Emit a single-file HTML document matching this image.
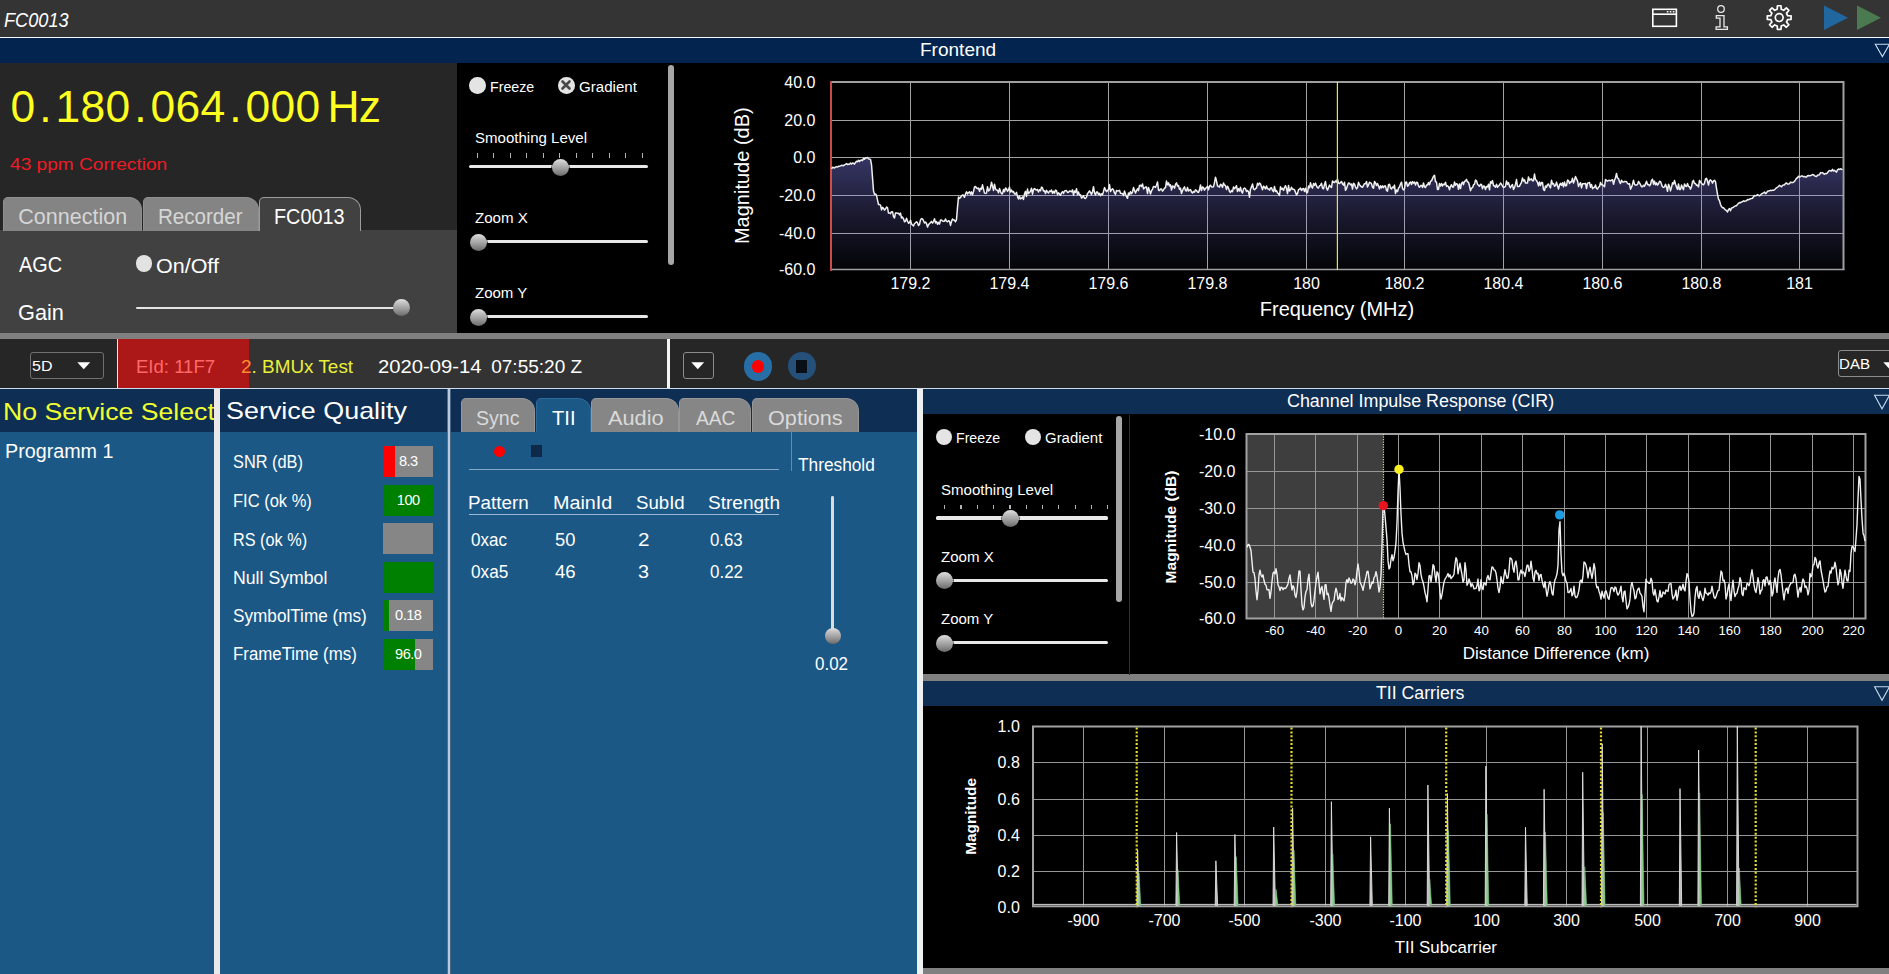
<!DOCTYPE html>
<html lang="en"><head><meta charset="utf-8"><title>FC0013</title>
<style>
html,body{margin:0;padding:0;background:#000;}
body{width:1889px;height:974px;position:relative;overflow:hidden;font-family:"Liberation Sans",Arial,sans-serif;}
.b{position:absolute;display:block;}
.t{position:absolute;white-space:pre;line-height:1;transform-origin:0 0;display:block;}
.knob{border-radius:50%;background:linear-gradient(180deg,#e0e0e0 0%,#c0c0c0 25%,#a0a0a0 55%,#6a6a6a 100%);box-shadow:0 0 0 0.6px #000;}
.nr{box-shadow:none;}
svg{overflow:hidden;}
</style></head>
<body>
<div class="b" style="left:0px;top:0px;width:1889px;height:37px;background:#343434;"></div>
<div class="b" style="left:0px;top:37px;width:1889px;height:1px;background:#f4f8fa;"></div>
<div class="b" style="left:0px;top:38px;width:1889px;height:25px;background:#02244e;"></div>
<span class="t" style="left:4.45px;top:11px;font-size:19.5px;color:#fff;transform:scaleX(0.9324);font-style:italic;">FC0013</span>
<span class="t" style="left:919.98px;top:42px;font-size:17.5px;color:#fff;transform:scaleX(1.0865);">Frontend</span>
<svg class="b" style="left:1640px;top:0;width:249px;height:63px" viewBox="1640 0 249 63"><g fill="none" stroke="#fff" stroke-width="1.6"><rect x="1652.8" y="9.3" width="23.6" height="17"/><path d="M1652.8,14.2H1676.4"/></g><path d="M1666.8,11.7h1.6M1669.8,11.7h1.6M1672.8,11.7h1.6" stroke="#fff" stroke-width="1.4"/><g fill="none" stroke="#e8e8e8" stroke-width="1.3"><circle cx="1721" cy="9" r="3.3"/><path d="M1716.3,15.6h7.7v11.2h3.4v2.5h-11.3v-2.5h3.9v-8.7h-3.7z"/></g><g fill="none" stroke="#fff" stroke-width="1.7" stroke-linejoin="round"><path d="M1777.19,9.24 L1777.42,5.73 L1780.98,5.73 L1781.21,9.24 L1783.69,10.27 L1786.33,7.95 L1788.85,10.47 L1786.53,13.11 L1787.56,15.59 L1791.07,15.82 L1791.07,19.38 L1787.56,19.61 L1786.53,22.09 L1788.85,24.73 L1786.33,27.25 L1783.69,24.93 L1781.21,25.96 L1780.98,29.47 L1777.42,29.47 L1777.19,25.96 L1774.71,24.93 L1772.07,27.25 L1769.55,24.73 L1771.87,22.09 L1770.84,19.61 L1767.33,19.38 L1767.33,15.82 L1770.84,15.59 L1771.87,13.11 L1769.55,10.47 L1772.07,7.95 L1774.71,10.27Z"/><circle cx="1779.2" cy="17.6" r="3.9"/></g><path d="M1824,5.5L1848,17.7L1824,30z" fill="#20669f"/><path d="M1857,5.5L1881,17.7L1857,30z" fill="#4b7a50"/><path d="M1875.3,44.2H1889.5L1882.4,56.6z" fill="none" stroke="#c8dcf0" stroke-width="1.1"/></svg>
<div class="b" style="left:0px;top:63px;width:457px;height:270px;background:#262626;"></div>
<span class="t" style="left:10.6px;top:85px;font-size:44.4px;color:#ffff20;letter-spacing:0.31px">0<span style="padding:0 3.67px">.</span>180<span style="padding:0 3.67px">.</span>064<span style="padding:0 3.67px">.</span>000 <span style="margin-left:-5.76px;letter-spacing:-0.6px">Hz</span></span>
<span class="t" style="left:10.02px;top:156px;font-size:16.5px;color:#f01a24;transform:scaleX(1.1585);">43 ppm Correction</span>
<div class="b" style="left:0px;top:230px;width:457px;height:103px;background:#414141;"></div>
<div class="b" style="left:3px;top:197px;width:138.8px;height:34px;background:#848484;box-sizing:border-box;border-radius:5px 13px 0 0;border:1px solid #909090;border-bottom:none;"></div><span class="t" style="left:18.32px;top:207px;font-size:21.5px;color:#d6d6d6;">Connection</span>
<div class="b" style="left:143px;top:197px;width:115.7px;height:34px;background:#848484;box-sizing:border-box;border-radius:5px 13px 0 0;border:1px solid #909090;border-bottom:none;"></div><span class="t" style="left:158.36px;top:207px;font-size:21.5px;color:#d6d6d6;transform:scaleX(0.9557);">Recorder</span>
<div class="b" style="left:259px;top:197px;width:102px;height:34px;background:#414141;box-sizing:border-box;border-radius:5px 13px 0 0;border:1px solid #9c9c9c;border-bottom:none;"></div><span class="t" style="left:274.42px;top:207px;font-size:21.5px;color:#fff;transform:scaleX(0.9208);">FC0013</span>
<span class="t" style="left:18.7px;top:254px;font-size:22px;color:#fff;transform:scaleX(0.9027);">AGC</span>
<div class="b" style="left:135.6px;top:255.2px;width:16.4px;height:16.4px;background:#e2e2e2;border-radius:50%;"></div>
<span class="t" style="left:156.03px;top:255px;font-size:21px;color:#fff;transform:scaleX(1.0234);">On/Off</span>
<span class="t" style="left:17.61px;top:302px;font-size:22px;color:#fff;transform:scaleX(0.9866);">Gain</span>
<div class="b" style="left:136px;top:306.6px;width:260px;height:2.2px;background:#e4e4e4;border-radius:1.5px;"></div>
<div class="b knob nr" style="left:393.2px;top:299.2px;width:17px;height:17px"></div>
<div class="b" style="left:457px;top:63px;width:1432px;height:270px;background:#000;"></div>
<div class="b" style="left:469px;top:77.1px;width:16.6px;height:16.6px;background:#e4e4e4;border-radius:50%;"></div>
<span class="t" style="left:489.86px;top:79px;font-size:15.5px;color:#fff;transform:scaleX(0.9164);">Freeze</span>
<div class="b" style="left:558.1px;top:77.1px;width:16.6px;height:16.6px;background:#e4e4e4;border-radius:50%;"></div><svg class="b" style="left:560.4px;top:79.4px;width:12px;height:12px" viewBox="-6 -6 12 12"><path d="M-3.5,-3.5L3.5,3.5M3.5,-3.5L-3.5,3.5" stroke="#484848" stroke-width="2.6" stroke-linecap="round"/></svg>
<span class="t" style="left:579.25px;top:79px;font-size:15.5px;color:#fff;transform:scaleX(0.9729);">Gradient</span>
<span class="t" style="left:474.92px;top:130px;font-size:15.5px;color:#fff;transform:scaleX(0.9702);">Smoothing Level</span>
<div class="b" style="left:476.8px;top:153px;width:1.2px;height:5.2px;background:#b4b4b4;"></div><div class="b" style="left:493.29px;top:153px;width:1.2px;height:5.2px;background:#b4b4b4;"></div><div class="b" style="left:509.78px;top:153px;width:1.2px;height:5.2px;background:#b4b4b4;"></div><div class="b" style="left:526.27px;top:153px;width:1.2px;height:5.2px;background:#b4b4b4;"></div><div class="b" style="left:542.76px;top:153px;width:1.2px;height:5.2px;background:#b4b4b4;"></div><div class="b" style="left:559.25px;top:153px;width:1.2px;height:5.2px;background:#b4b4b4;"></div><div class="b" style="left:575.74px;top:153px;width:1.2px;height:5.2px;background:#b4b4b4;"></div><div class="b" style="left:592.23px;top:153px;width:1.2px;height:5.2px;background:#b4b4b4;"></div><div class="b" style="left:608.72px;top:153px;width:1.2px;height:5.2px;background:#b4b4b4;"></div><div class="b" style="left:625.21px;top:153px;width:1.2px;height:5.2px;background:#b4b4b4;"></div><div class="b" style="left:641.7px;top:153px;width:1.2px;height:5.2px;background:#b4b4b4;"></div>
<div class="b" style="left:469.4px;top:165.2px;width:179px;height:3.2px;background:#e8e8e8;border-radius:1.5px;"></div>
<div class="b knob" style="left:551.5px;top:158.5px;width:17px;height:17px"></div>
<span class="t" style="left:475.25px;top:210px;font-size:15.5px;color:#fff;transform:scaleX(0.9743);">Zoom X</span>
<div class="b" style="left:478px;top:240px;width:170.2px;height:3.2px;background:#e8e8e8;border-radius:1.5px;"></div>
<div class="b knob" style="left:469.5px;top:233.5px;width:17px;height:17px"></div>
<span class="t" style="left:475.25px;top:285px;font-size:15.5px;color:#fff;transform:scaleX(0.9687);">Zoom Y</span>
<div class="b" style="left:478px;top:314.9px;width:170.2px;height:3.2px;background:#e8e8e8;border-radius:1.5px;"></div>
<div class="b knob" style="left:469.5px;top:308.5px;width:17px;height:17px"></div>
<div class="b" style="left:668.2px;top:65px;width:6.2px;height:199.5px;background:#a6a6a6;border-radius:3px;"></div>
<svg class="b" style="left:680px;top:63px;width:1209px;height:270px" viewBox="680 63 1209 270" font-family="Liberation Sans, Arial, sans-serif" fill="#fff">
<defs><linearGradient id="fg" x1="0" y1="155" x2="0" y2="270" gradientUnits="userSpaceOnUse"><stop offset="0" stop-color="#8684f6" stop-opacity="0.42"/><stop offset="0.5" stop-color="#8684f6" stop-opacity="0.2"/><stop offset="1" stop-color="#8684f6" stop-opacity="0.03"/></linearGradient></defs>
<path d="M831.5,120.5H1843.5M831.5,157.5H1843.5M831.5,195.5H1843.5M831.5,233.5H1843.5M910.5,82V270M1009.5,82V270M1108.5,82V270M1207.5,82V270M1306.5,82V270M1404.5,82V270M1503.5,82V270M1602.5,82V270M1701.5,82V270M1799.5,82V270" stroke="#a2a2a2" stroke-width="1" fill="none"/>
<path d="M831.5,82H1843.5V270" stroke="#a0a0a0" stroke-width="2" fill="none"/>
<path d="M831.5,269.4H1844.5" stroke="#a0a0a0" stroke-width="1.5" fill="none"/>
<path d="M831,81V271" stroke="#cc4a4a" stroke-width="2" fill="none"/>
<polygon points="831.5,270 831.5,168.9 832.5,167.3 833.5,167.5 834.5,168 835.5,167.2 836.5,166.6 837.5,167.1 838.5,166.2 839.5,166.3 840.5,165.9 841.5,165.3 842.5,165.5 843.5,165.7 844.5,164.9 845.5,164.3 846.5,163.6 847.5,164.5 848.5,164.2 849.5,164.2 850.5,163 851.5,164 852.5,163.1 853.5,163.2 854.5,164.1 855.5,162.4 856.5,161.3 857.5,161.7 858.5,160.3 859.5,161.4 860.5,160.4 861.5,160 862.5,160.6 863.5,158.2 864.5,159.2 865.5,157.8 866.5,157.9 867.5,157.4 868.5,158.8 869.5,159.1 870.5,159.5 871.5,164.6 872.5,177.5 873.5,190.9 874.5,194.2 875.5,193.9 876.5,195.3 877.5,199.8 878.5,204.6 879.5,204.5 880.5,205.2 881.5,209.9 882.5,207.4 883.5,208.4 884.5,210.1 885.5,209 886.5,207 887.5,207.7 888.5,213.1 889.5,212.9 890.5,213.6 891.5,211.7 892.5,211.7 893.5,216.6 894.5,218 895.5,212.9 896.5,213 897.5,213.2 898.5,213.2 899.5,214.9 900.5,213.1 901.5,218.1 902.5,217 903.5,218.8 904.5,221.7 905.5,221.4 906.5,218.2 907.5,221 908.5,223.3 909.5,222.6 910.5,220.3 911.5,223.9 912.5,225 913.5,225.9 914.5,223.5 915.5,222.8 916.5,221.8 917.5,222.8 918.5,225.6 919.5,224.4 920.5,219.9 921.5,218.6 922.5,219 923.5,220.7 924.5,223 925.5,222 926.5,223.5 927.5,227.1 928.5,224.7 929.5,223.5 930.5,222.6 931.5,221.4 932.5,223.1 933.5,221.6 934.5,218.8 935.5,222.9 936.5,221.5 937.5,224.3 938.5,222.4 939.5,224 940.5,220 941.5,220.1 942.5,221 943.5,221.3 944.5,221.3 945.5,219 946.5,221.2 947.5,221.8 948.5,220.8 949.5,221.2 950.5,225.4 951.5,221.4 952.5,219 953.5,220 954.5,220.1 955.5,221.8 956.5,219.7 957.5,207.4 958.5,197 959.5,198.4 960.5,197.5 961.5,195.9 962.5,195 963.5,195.3 964.5,197.3 965.5,193.8 966.5,191.7 967.5,194 968.5,192.5 969.5,191.8 970.5,194.3 971.5,191.9 972.5,194.9 973.5,191.6 974.5,186.9 975.5,186.5 976.5,188 977.5,188.5 978.5,188.1 979.5,191.4 980.5,188.3 981.5,189.2 982.5,184.8 983.5,189.1 984.5,193.1 985.5,193.4 986.5,193.1 987.5,186.7 988.5,190.9 989.5,190.2 990.5,187.5 991.5,182.2 992.5,186.1 993.5,190.4 994.5,184.2 995.5,188.9 996.5,190 997.5,190.2 998.5,192.8 999.5,188.6 1000.5,191.5 1001.5,193.8 1002.5,193.7 1003.5,189.5 1004.5,191.7 1005.5,188 1006.5,188.9 1007.5,191.2 1008.5,190.1 1009.5,187.1 1010.5,192.1 1011.5,190 1012.5,192 1013.5,191.5 1014.5,194 1015.5,194.1 1016.5,192.3 1017.5,196.6 1018.5,199 1019.5,196 1020.5,198.9 1021.5,198.4 1022.5,196.8 1023.5,199.4 1024.5,193.9 1025.5,191.4 1026.5,196.5 1027.5,189.1 1028.5,193.6 1029.5,192.4 1030.5,191.2 1031.5,188.3 1032.5,194.2 1033.5,189.6 1034.5,188.5 1035.5,189.5 1036.5,190.1 1037.5,189.5 1038.5,192 1039.5,189.8 1040.5,190.7 1041.5,187.1 1042.5,187.9 1043.5,191 1044.5,190.7 1045.5,193.6 1046.5,190.3 1047.5,192 1048.5,192.9 1049.5,191 1050.5,191.5 1051.5,190 1052.5,193.3 1053.5,191.4 1054.5,193.2 1055.5,190.1 1056.5,190.7 1057.5,194.6 1058.5,192.8 1059.5,194 1060.5,195.3 1061.5,192.9 1062.5,191.6 1063.5,193.5 1064.5,191 1065.5,190.8 1066.5,190.6 1067.5,192.5 1068.5,192.2 1069.5,191 1070.5,191.2 1071.5,191.8 1072.5,189.8 1073.5,195.1 1074.5,190.9 1075.5,192.4 1076.5,188.7 1077.5,194.5 1078.5,191.9 1079.5,195.1 1080.5,194.7 1081.5,198.1 1082.5,197.2 1083.5,195.7 1084.5,198.3 1085.5,198.4 1086.5,197.1 1087.5,193.5 1088.5,192.5 1089.5,190.9 1090.5,192.4 1091.5,194.6 1092.5,191.7 1093.5,186.7 1094.5,192.9 1095.5,195 1096.5,191.9 1097.5,192.1 1098.5,194.4 1099.5,193.3 1100.5,195.7 1101.5,193.8 1102.5,194.7 1103.5,191.4 1104.5,187.6 1105.5,189.6 1106.5,191.6 1107.5,190.6 1108.5,189.4 1109.5,184.5 1110.5,191.6 1111.5,189.7 1112.5,188.8 1113.5,189.9 1114.5,193 1115.5,194.4 1116.5,190.4 1117.5,191.1 1118.5,190.8 1119.5,190.3 1120.5,193.2 1121.5,193.6 1122.5,193.5 1123.5,195.6 1124.5,191 1125.5,194.3 1126.5,196.6 1127.5,198.3 1128.5,192.9 1129.5,194.7 1130.5,191.6 1131.5,193.8 1132.5,192 1133.5,187.6 1134.5,190.3 1135.5,193 1136.5,190.8 1137.5,188.7 1138.5,190.7 1139.5,185.4 1140.5,185.2 1141.5,186.5 1142.5,183.9 1143.5,188.9 1144.5,188 1145.5,187.1 1146.5,187.1 1147.5,193.6 1148.5,187.6 1149.5,190.4 1150.5,194 1151.5,190.9 1152.5,189.1 1153.5,186.5 1154.5,186.7 1155.5,187.3 1156.5,185.2 1157.5,181.9 1158.5,190.2 1159.5,190.6 1160.5,188.9 1161.5,189.1 1162.5,191.1 1163.5,189.9 1164.5,188 1165.5,187.7 1166.5,181.1 1167.5,184.8 1168.5,182.8 1169.5,185.9 1170.5,184.9 1171.5,190 1172.5,186 1173.5,186.4 1174.5,188.2 1175.5,184.4 1176.5,182.9 1177.5,186 1178.5,185.5 1179.5,189.4 1180.5,188.1 1181.5,193.5 1182.5,190.8 1183.5,188.3 1184.5,186.8 1185.5,190.6 1186.5,191 1187.5,187.4 1188.5,191 1189.5,189.9 1190.5,189.6 1191.5,191.9 1192.5,193 1193.5,191.5 1194.5,192.1 1195.5,189.9 1196.5,190.5 1197.5,192.1 1198.5,192.4 1199.5,189.9 1200.5,185 1201.5,190.5 1202.5,186.9 1203.5,187.6 1204.5,190.1 1205.5,188.3 1206.5,187.7 1207.5,186.3 1208.5,189.7 1209.5,186 1210.5,185.2 1211.5,186.8 1212.5,187 1213.5,186.7 1214.5,182.6 1215.5,177.2 1216.5,180.9 1217.5,186 1218.5,186.4 1219.5,187.1 1220.5,184.2 1221.5,185.1 1222.5,187.4 1223.5,183 1224.5,185 1225.5,185.6 1226.5,189.6 1227.5,186.2 1228.5,188 1229.5,191.5 1230.5,192.5 1231.5,190.4 1232.5,191.6 1233.5,187 1234.5,188.7 1235.5,187.5 1236.5,185.7 1237.5,191.6 1238.5,188.7 1239.5,191 1240.5,187.3 1241.5,191.7 1242.5,193.2 1243.5,188.9 1244.5,188 1245.5,188.7 1246.5,191.5 1247.5,190.6 1248.5,191.8 1249.5,197.2 1250.5,189.2 1251.5,186.9 1252.5,184 1253.5,188.9 1254.5,189.7 1255.5,188.7 1256.5,187.9 1257.5,183.3 1258.5,185 1259.5,183 1260.5,184.1 1261.5,186.7 1262.5,189.7 1263.5,186.1 1264.5,187.3 1265.5,188.9 1266.5,185.9 1267.5,188.8 1268.5,189 1269.5,190.1 1270.5,187.9 1271.5,187.7 1272.5,190.4 1273.5,191.6 1274.5,186.4 1275.5,191.4 1276.5,190.5 1277.5,192.9 1278.5,193.8 1279.5,195.5 1280.5,186.8 1281.5,189.3 1282.5,188.2 1283.5,190.4 1284.5,187.6 1285.5,185.7 1286.5,188.4 1287.5,193.6 1288.5,185.5 1289.5,191.1 1290.5,189.7 1291.5,187.2 1292.5,189.3 1293.5,189.2 1294.5,189.9 1295.5,192.4 1296.5,194.9 1297.5,193.5 1298.5,189.7 1299.5,189.2 1300.5,188.1 1301.5,190.5 1302.5,189 1303.5,188.5 1304.5,191.4 1305.5,188.2 1306.5,192.7 1307.5,192.6 1308.5,186.1 1309.5,187.8 1310.5,182.7 1311.5,186.6 1312.5,188.2 1313.5,183.6 1314.5,185.3 1315.5,183.1 1316.5,186 1317.5,187.7 1318.5,188 1319.5,185.8 1320.5,185.4 1321.5,183.2 1322.5,188.1 1323.5,188.8 1324.5,184.5 1325.5,181.5 1326.5,188 1327.5,190.1 1328.5,187.6 1329.5,185.1 1330.5,186.6 1331.5,187.5 1332.5,180.9 1333.5,182.3 1334.5,182.6 1335.5,181 1336.5,182.1 1337.5,179 1338.5,183.2 1339.5,183.5 1340.5,182.4 1341.5,181.5 1342.5,183.9 1343.5,185.1 1344.5,182.2 1345.5,190.3 1346.5,188.6 1347.5,185.6 1348.5,183 1349.5,183.2 1350.5,184.8 1351.5,184 1352.5,189 1353.5,183.3 1354.5,184 1355.5,187 1356.5,188.9 1357.5,187.5 1358.5,182.3 1359.5,184.8 1360.5,185.9 1361.5,186.9 1362.5,187.3 1363.5,185.3 1364.5,183.7 1365.5,183.8 1366.5,181.5 1367.5,187 1368.5,184.9 1369.5,182.2 1370.5,182.8 1371.5,183.7 1372.5,187.2 1373.5,188.3 1374.5,181.4 1375.5,182.9 1376.5,185.4 1377.5,183.6 1378.5,186.1 1379.5,188.9 1380.5,185.8 1381.5,187.9 1382.5,185.9 1383.5,187.6 1384.5,185.9 1385.5,186.1 1386.5,190.4 1387.5,191.1 1388.5,184.6 1389.5,184.3 1390.5,187.9 1391.5,189 1392.5,187.1 1393.5,187.8 1394.5,185.1 1395.5,193.6 1396.5,190 1397.5,191.6 1398.5,188.1 1399.5,187 1400.5,184.1 1401.5,182.2 1402.5,188.5 1403.5,189.9 1404.5,188.7 1405.5,182.5 1406.5,182 1407.5,186.2 1408.5,185.4 1409.5,182.9 1410.5,182 1411.5,184.5 1412.5,181.6 1413.5,183.1 1414.5,182 1415.5,185 1416.5,182.2 1417.5,182.5 1418.5,186.1 1419.5,187.3 1420.5,185.5 1421.5,185.4 1422.5,187.5 1423.5,183 1424.5,186.9 1425.5,187.5 1426.5,184.9 1427.5,185.1 1428.5,182.6 1429.5,184.8 1430.5,181.3 1431.5,180.9 1432.5,178.6 1433.5,176.2 1434.5,175.2 1435.5,181.7 1436.5,182 1437.5,189.6 1438.5,189.3 1439.5,183.4 1440.5,186 1441.5,183.4 1442.5,186 1443.5,184.2 1444.5,184.6 1445.5,182.2 1446.5,186.4 1447.5,185.7 1448.5,186.8 1449.5,189.8 1450.5,186.3 1451.5,184.7 1452.5,187.1 1453.5,187.1 1454.5,182.1 1455.5,185.2 1456.5,183.7 1457.5,184.4 1458.5,189.3 1459.5,184 1460.5,188.6 1461.5,183.5 1462.5,182.1 1463.5,184.6 1464.5,181.3 1465.5,181.1 1466.5,179.4 1467.5,182 1468.5,182.2 1469.5,186 1470.5,190.7 1471.5,187.9 1472.5,187.8 1473.5,184.9 1474.5,184.1 1475.5,180.1 1476.5,180.8 1477.5,184.1 1478.5,185.4 1479.5,186.3 1480.5,184.3 1481.5,184.4 1482.5,188.8 1483.5,185.9 1484.5,186.2 1485.5,189.5 1486.5,186.5 1487.5,186.9 1488.5,184.3 1489.5,189.8 1490.5,181.7 1491.5,183.1 1492.5,180.6 1493.5,185.5 1494.5,186 1495.5,187.2 1496.5,184.3 1497.5,187.2 1498.5,186.1 1499.5,185 1500.5,183 1501.5,184.2 1502.5,186.1 1503.5,187.6 1504.5,187.1 1505.5,186.2 1506.5,180.9 1507.5,184.3 1508.5,182.7 1509.5,186.1 1510.5,187.8 1511.5,185.5 1512.5,184.6 1513.5,189.5 1514.5,187.6 1515.5,184.1 1516.5,179.6 1517.5,186.6 1518.5,186.6 1519.5,186.2 1520.5,184.2 1521.5,182.3 1522.5,177.9 1523.5,181.1 1524.5,179.8 1525.5,183 1526.5,183 1527.5,182.9 1528.5,176.9 1529.5,180.3 1530.5,179.4 1531.5,178.8 1532.5,180.8 1533.5,180.7 1534.5,174.1 1535.5,179.7 1536.5,180.3 1537.5,182.3 1538.5,185.9 1539.5,181.9 1540.5,185.5 1541.5,182.4 1542.5,182.5 1543.5,189.6 1544.5,190.5 1545.5,186 1546.5,187.1 1547.5,184.6 1548.5,184 1549.5,186.2 1550.5,187.9 1551.5,180.3 1552.5,184 1553.5,183.6 1554.5,186.2 1555.5,185.6 1556.5,182.1 1557.5,185.7 1558.5,189 1559.5,185 1560.5,183.3 1561.5,185.3 1562.5,182.8 1563.5,186.8 1564.5,182.1 1565.5,185.7 1566.5,185.7 1567.5,180.1 1568.5,180.4 1569.5,183.5 1570.5,181.8 1571.5,181.9 1572.5,178.2 1573.5,183.1 1574.5,180.3 1575.5,176.5 1576.5,178.9 1577.5,180.8 1578.5,186.4 1579.5,184.2 1580.5,182.7 1581.5,187.9 1582.5,183.8 1583.5,183.7 1584.5,183.8 1585.5,183.4 1586.5,188.5 1587.5,183.3 1588.5,182.9 1589.5,182.5 1590.5,187.2 1591.5,184.4 1592.5,188.7 1593.5,187.5 1594.5,187.5 1595.5,184.9 1596.5,188.4 1597.5,189 1598.5,187.2 1599.5,186.5 1600.5,182.4 1601.5,184.8 1602.5,184.8 1603.5,185.6 1604.5,186.8 1605.5,179.5 1606.5,180.6 1607.5,181.2 1608.5,180.5 1609.5,180.3 1610.5,180.9 1611.5,180.2 1612.5,179.7 1613.5,184.2 1614.5,180.3 1615.5,177.7 1616.5,173.4 1617.5,178.1 1618.5,178.4 1619.5,181.8 1620.5,183.5 1621.5,180.2 1622.5,181.9 1623.5,182.1 1624.5,181.5 1625.5,181.6 1626.5,181.7 1627.5,183.5 1628.5,184.2 1629.5,183.6 1630.5,189.2 1631.5,187.2 1632.5,184.4 1633.5,180.3 1634.5,184.4 1635.5,185.1 1636.5,185.1 1637.5,184.4 1638.5,181.5 1639.5,182.9 1640.5,184.6 1641.5,186.7 1642.5,186.7 1643.5,185.3 1644.5,186.3 1645.5,183.9 1646.5,181.2 1647.5,184.5 1648.5,184.4 1649.5,185.8 1650.5,184.5 1651.5,180.4 1652.5,179.2 1653.5,184.2 1654.5,181.1 1655.5,184.8 1656.5,182.9 1657.5,185.1 1658.5,183.7 1659.5,181.3 1660.5,181.6 1661.5,184.3 1662.5,186.9 1663.5,187.4 1664.5,186.9 1665.5,184.3 1666.5,186.9 1667.5,191.3 1668.5,184.3 1669.5,186.3 1670.5,190.9 1671.5,187.4 1672.5,182.8 1673.5,183.9 1674.5,180.5 1675.5,184.3 1676.5,187 1677.5,189.4 1678.5,183.9 1679.5,189.5 1680.5,189.4 1681.5,185.1 1682.5,187.6 1683.5,189.7 1684.5,183.9 1685.5,186 1686.5,186.4 1687.5,183.6 1688.5,186.6 1689.5,186.7 1690.5,189.1 1691.5,186.8 1692.5,181.8 1693.5,180.4 1694.5,183.4 1695.5,183.5 1696.5,185.4 1697.5,185.1 1698.5,186.9 1699.5,180.4 1700.5,182.1 1701.5,183.2 1702.5,184.3 1703.5,184.8 1704.5,183.1 1705.5,178.9 1706.5,178.3 1707.5,181.2 1708.5,185.1 1709.5,180.7 1710.5,179.9 1711.5,181 1712.5,183.1 1713.5,180.9 1714.5,180.3 1715.5,181.7 1716.5,188.3 1717.5,194.3 1718.5,199.2 1719.5,200.6 1720.5,204.5 1721.5,206.6 1722.5,207.7 1723.5,207.7 1724.5,209 1725.5,209.9 1726.5,210.6 1727.5,212 1728.5,209.6 1729.5,208.6 1730.5,210.7 1731.5,208 1732.5,207.7 1733.5,207.3 1734.5,206.3 1735.5,205.8 1736.5,205.7 1737.5,204.4 1738.5,203.3 1739.5,202.6 1740.5,202.8 1741.5,201.9 1742.5,201.7 1743.5,200.8 1744.5,201.4 1745.5,200.9 1746.5,200.7 1747.5,199.6 1748.5,199.7 1749.5,199.3 1750.5,198.7 1751.5,198.5 1752.5,198.2 1753.5,196.8 1754.5,195.6 1755.5,195.8 1756.5,195.5 1757.5,194.6 1758.5,195.2 1759.5,195.8 1760.5,195 1761.5,194 1762.5,193.4 1763.5,192.8 1764.5,192 1765.5,193.6 1766.5,193 1767.5,191.2 1768.5,191 1769.5,190.8 1770.5,190.3 1771.5,190.4 1772.5,190.2 1773.5,190.3 1774.5,189.7 1775.5,188.8 1776.5,187.8 1777.5,187.2 1778.5,186.5 1779.5,185.3 1780.5,186 1781.5,186.8 1782.5,185.4 1783.5,184.9 1784.5,184.9 1785.5,183.5 1786.5,183 1787.5,184.1 1788.5,184 1789.5,183.6 1790.5,182.1 1791.5,182.5 1792.5,182.6 1793.5,182.3 1794.5,181.3 1795.5,179.8 1796.5,178.2 1797.5,177.8 1798.5,176.2 1799.5,177.1 1800.5,176.6 1801.5,175.9 1802.5,176 1803.5,176.8 1804.5,176.4 1805.5,177.1 1806.5,177 1807.5,175.7 1808.5,175.5 1809.5,175.9 1810.5,175.5 1811.5,175.2 1812.5,174.6 1813.5,174.8 1814.5,175.6 1815.5,176.3 1816.5,176.4 1817.5,175.2 1818.5,174.9 1819.5,174.7 1820.5,172.6 1821.5,172.9 1822.5,172.6 1823.5,173.7 1824.5,174.3 1825.5,173.4 1826.5,173.7 1827.5,172.9 1828.5,171.2 1829.5,170.6 1830.5,170.7 1831.5,171 1832.5,169.4 1833.5,171 1834.5,170.3 1835.5,171.2 1836.5,172.1 1837.5,169.8 1838.5,169 1839.5,169.5 1840.5,168.8 1841.5,169.2 1842.5,169.8 1843.5,270" fill="url(#fg)"/>
<polyline points="831.5,168.9 832.5,167.3 833.5,167.5 834.5,168 835.5,167.2 836.5,166.6 837.5,167.1 838.5,166.2 839.5,166.3 840.5,165.9 841.5,165.3 842.5,165.5 843.5,165.7 844.5,164.9 845.5,164.3 846.5,163.6 847.5,164.5 848.5,164.2 849.5,164.2 850.5,163 851.5,164 852.5,163.1 853.5,163.2 854.5,164.1 855.5,162.4 856.5,161.3 857.5,161.7 858.5,160.3 859.5,161.4 860.5,160.4 861.5,160 862.5,160.6 863.5,158.2 864.5,159.2 865.5,157.8 866.5,157.9 867.5,157.4 868.5,158.8 869.5,159.1 870.5,159.5 871.5,164.6 872.5,177.5 873.5,190.9 874.5,194.2 875.5,193.9 876.5,195.3 877.5,199.8 878.5,204.6 879.5,204.5 880.5,205.2 881.5,209.9 882.5,207.4 883.5,208.4 884.5,210.1 885.5,209 886.5,207 887.5,207.7 888.5,213.1 889.5,212.9 890.5,213.6 891.5,211.7 892.5,211.7 893.5,216.6 894.5,218 895.5,212.9 896.5,213 897.5,213.2 898.5,213.2 899.5,214.9 900.5,213.1 901.5,218.1 902.5,217 903.5,218.8 904.5,221.7 905.5,221.4 906.5,218.2 907.5,221 908.5,223.3 909.5,222.6 910.5,220.3 911.5,223.9 912.5,225 913.5,225.9 914.5,223.5 915.5,222.8 916.5,221.8 917.5,222.8 918.5,225.6 919.5,224.4 920.5,219.9 921.5,218.6 922.5,219 923.5,220.7 924.5,223 925.5,222 926.5,223.5 927.5,227.1 928.5,224.7 929.5,223.5 930.5,222.6 931.5,221.4 932.5,223.1 933.5,221.6 934.5,218.8 935.5,222.9 936.5,221.5 937.5,224.3 938.5,222.4 939.5,224 940.5,220 941.5,220.1 942.5,221 943.5,221.3 944.5,221.3 945.5,219 946.5,221.2 947.5,221.8 948.5,220.8 949.5,221.2 950.5,225.4 951.5,221.4 952.5,219 953.5,220 954.5,220.1 955.5,221.8 956.5,219.7 957.5,207.4 958.5,197 959.5,198.4 960.5,197.5 961.5,195.9 962.5,195 963.5,195.3 964.5,197.3 965.5,193.8 966.5,191.7 967.5,194 968.5,192.5 969.5,191.8 970.5,194.3 971.5,191.9 972.5,194.9 973.5,191.6 974.5,186.9 975.5,186.5 976.5,188 977.5,188.5 978.5,188.1 979.5,191.4 980.5,188.3 981.5,189.2 982.5,184.8 983.5,189.1 984.5,193.1 985.5,193.4 986.5,193.1 987.5,186.7 988.5,190.9 989.5,190.2 990.5,187.5 991.5,182.2 992.5,186.1 993.5,190.4 994.5,184.2 995.5,188.9 996.5,190 997.5,190.2 998.5,192.8 999.5,188.6 1000.5,191.5 1001.5,193.8 1002.5,193.7 1003.5,189.5 1004.5,191.7 1005.5,188 1006.5,188.9 1007.5,191.2 1008.5,190.1 1009.5,187.1 1010.5,192.1 1011.5,190 1012.5,192 1013.5,191.5 1014.5,194 1015.5,194.1 1016.5,192.3 1017.5,196.6 1018.5,199 1019.5,196 1020.5,198.9 1021.5,198.4 1022.5,196.8 1023.5,199.4 1024.5,193.9 1025.5,191.4 1026.5,196.5 1027.5,189.1 1028.5,193.6 1029.5,192.4 1030.5,191.2 1031.5,188.3 1032.5,194.2 1033.5,189.6 1034.5,188.5 1035.5,189.5 1036.5,190.1 1037.5,189.5 1038.5,192 1039.5,189.8 1040.5,190.7 1041.5,187.1 1042.5,187.9 1043.5,191 1044.5,190.7 1045.5,193.6 1046.5,190.3 1047.5,192 1048.5,192.9 1049.5,191 1050.5,191.5 1051.5,190 1052.5,193.3 1053.5,191.4 1054.5,193.2 1055.5,190.1 1056.5,190.7 1057.5,194.6 1058.5,192.8 1059.5,194 1060.5,195.3 1061.5,192.9 1062.5,191.6 1063.5,193.5 1064.5,191 1065.5,190.8 1066.5,190.6 1067.5,192.5 1068.5,192.2 1069.5,191 1070.5,191.2 1071.5,191.8 1072.5,189.8 1073.5,195.1 1074.5,190.9 1075.5,192.4 1076.5,188.7 1077.5,194.5 1078.5,191.9 1079.5,195.1 1080.5,194.7 1081.5,198.1 1082.5,197.2 1083.5,195.7 1084.5,198.3 1085.5,198.4 1086.5,197.1 1087.5,193.5 1088.5,192.5 1089.5,190.9 1090.5,192.4 1091.5,194.6 1092.5,191.7 1093.5,186.7 1094.5,192.9 1095.5,195 1096.5,191.9 1097.5,192.1 1098.5,194.4 1099.5,193.3 1100.5,195.7 1101.5,193.8 1102.5,194.7 1103.5,191.4 1104.5,187.6 1105.5,189.6 1106.5,191.6 1107.5,190.6 1108.5,189.4 1109.5,184.5 1110.5,191.6 1111.5,189.7 1112.5,188.8 1113.5,189.9 1114.5,193 1115.5,194.4 1116.5,190.4 1117.5,191.1 1118.5,190.8 1119.5,190.3 1120.5,193.2 1121.5,193.6 1122.5,193.5 1123.5,195.6 1124.5,191 1125.5,194.3 1126.5,196.6 1127.5,198.3 1128.5,192.9 1129.5,194.7 1130.5,191.6 1131.5,193.8 1132.5,192 1133.5,187.6 1134.5,190.3 1135.5,193 1136.5,190.8 1137.5,188.7 1138.5,190.7 1139.5,185.4 1140.5,185.2 1141.5,186.5 1142.5,183.9 1143.5,188.9 1144.5,188 1145.5,187.1 1146.5,187.1 1147.5,193.6 1148.5,187.6 1149.5,190.4 1150.5,194 1151.5,190.9 1152.5,189.1 1153.5,186.5 1154.5,186.7 1155.5,187.3 1156.5,185.2 1157.5,181.9 1158.5,190.2 1159.5,190.6 1160.5,188.9 1161.5,189.1 1162.5,191.1 1163.5,189.9 1164.5,188 1165.5,187.7 1166.5,181.1 1167.5,184.8 1168.5,182.8 1169.5,185.9 1170.5,184.9 1171.5,190 1172.5,186 1173.5,186.4 1174.5,188.2 1175.5,184.4 1176.5,182.9 1177.5,186 1178.5,185.5 1179.5,189.4 1180.5,188.1 1181.5,193.5 1182.5,190.8 1183.5,188.3 1184.5,186.8 1185.5,190.6 1186.5,191 1187.5,187.4 1188.5,191 1189.5,189.9 1190.5,189.6 1191.5,191.9 1192.5,193 1193.5,191.5 1194.5,192.1 1195.5,189.9 1196.5,190.5 1197.5,192.1 1198.5,192.4 1199.5,189.9 1200.5,185 1201.5,190.5 1202.5,186.9 1203.5,187.6 1204.5,190.1 1205.5,188.3 1206.5,187.7 1207.5,186.3 1208.5,189.7 1209.5,186 1210.5,185.2 1211.5,186.8 1212.5,187 1213.5,186.7 1214.5,182.6 1215.5,177.2 1216.5,180.9 1217.5,186 1218.5,186.4 1219.5,187.1 1220.5,184.2 1221.5,185.1 1222.5,187.4 1223.5,183 1224.5,185 1225.5,185.6 1226.5,189.6 1227.5,186.2 1228.5,188 1229.5,191.5 1230.5,192.5 1231.5,190.4 1232.5,191.6 1233.5,187 1234.5,188.7 1235.5,187.5 1236.5,185.7 1237.5,191.6 1238.5,188.7 1239.5,191 1240.5,187.3 1241.5,191.7 1242.5,193.2 1243.5,188.9 1244.5,188 1245.5,188.7 1246.5,191.5 1247.5,190.6 1248.5,191.8 1249.5,197.2 1250.5,189.2 1251.5,186.9 1252.5,184 1253.5,188.9 1254.5,189.7 1255.5,188.7 1256.5,187.9 1257.5,183.3 1258.5,185 1259.5,183 1260.5,184.1 1261.5,186.7 1262.5,189.7 1263.5,186.1 1264.5,187.3 1265.5,188.9 1266.5,185.9 1267.5,188.8 1268.5,189 1269.5,190.1 1270.5,187.9 1271.5,187.7 1272.5,190.4 1273.5,191.6 1274.5,186.4 1275.5,191.4 1276.5,190.5 1277.5,192.9 1278.5,193.8 1279.5,195.5 1280.5,186.8 1281.5,189.3 1282.5,188.2 1283.5,190.4 1284.5,187.6 1285.5,185.7 1286.5,188.4 1287.5,193.6 1288.5,185.5 1289.5,191.1 1290.5,189.7 1291.5,187.2 1292.5,189.3 1293.5,189.2 1294.5,189.9 1295.5,192.4 1296.5,194.9 1297.5,193.5 1298.5,189.7 1299.5,189.2 1300.5,188.1 1301.5,190.5 1302.5,189 1303.5,188.5 1304.5,191.4 1305.5,188.2 1306.5,192.7 1307.5,192.6 1308.5,186.1 1309.5,187.8 1310.5,182.7 1311.5,186.6 1312.5,188.2 1313.5,183.6 1314.5,185.3 1315.5,183.1 1316.5,186 1317.5,187.7 1318.5,188 1319.5,185.8 1320.5,185.4 1321.5,183.2 1322.5,188.1 1323.5,188.8 1324.5,184.5 1325.5,181.5 1326.5,188 1327.5,190.1 1328.5,187.6 1329.5,185.1 1330.5,186.6 1331.5,187.5 1332.5,180.9 1333.5,182.3 1334.5,182.6 1335.5,181 1336.5,182.1 1337.5,179 1338.5,183.2 1339.5,183.5 1340.5,182.4 1341.5,181.5 1342.5,183.9 1343.5,185.1 1344.5,182.2 1345.5,190.3 1346.5,188.6 1347.5,185.6 1348.5,183 1349.5,183.2 1350.5,184.8 1351.5,184 1352.5,189 1353.5,183.3 1354.5,184 1355.5,187 1356.5,188.9 1357.5,187.5 1358.5,182.3 1359.5,184.8 1360.5,185.9 1361.5,186.9 1362.5,187.3 1363.5,185.3 1364.5,183.7 1365.5,183.8 1366.5,181.5 1367.5,187 1368.5,184.9 1369.5,182.2 1370.5,182.8 1371.5,183.7 1372.5,187.2 1373.5,188.3 1374.5,181.4 1375.5,182.9 1376.5,185.4 1377.5,183.6 1378.5,186.1 1379.5,188.9 1380.5,185.8 1381.5,187.9 1382.5,185.9 1383.5,187.6 1384.5,185.9 1385.5,186.1 1386.5,190.4 1387.5,191.1 1388.5,184.6 1389.5,184.3 1390.5,187.9 1391.5,189 1392.5,187.1 1393.5,187.8 1394.5,185.1 1395.5,193.6 1396.5,190 1397.5,191.6 1398.5,188.1 1399.5,187 1400.5,184.1 1401.5,182.2 1402.5,188.5 1403.5,189.9 1404.5,188.7 1405.5,182.5 1406.5,182 1407.5,186.2 1408.5,185.4 1409.5,182.9 1410.5,182 1411.5,184.5 1412.5,181.6 1413.5,183.1 1414.5,182 1415.5,185 1416.5,182.2 1417.5,182.5 1418.5,186.1 1419.5,187.3 1420.5,185.5 1421.5,185.4 1422.5,187.5 1423.5,183 1424.5,186.9 1425.5,187.5 1426.5,184.9 1427.5,185.1 1428.5,182.6 1429.5,184.8 1430.5,181.3 1431.5,180.9 1432.5,178.6 1433.5,176.2 1434.5,175.2 1435.5,181.7 1436.5,182 1437.5,189.6 1438.5,189.3 1439.5,183.4 1440.5,186 1441.5,183.4 1442.5,186 1443.5,184.2 1444.5,184.6 1445.5,182.2 1446.5,186.4 1447.5,185.7 1448.5,186.8 1449.5,189.8 1450.5,186.3 1451.5,184.7 1452.5,187.1 1453.5,187.1 1454.5,182.1 1455.5,185.2 1456.5,183.7 1457.5,184.4 1458.5,189.3 1459.5,184 1460.5,188.6 1461.5,183.5 1462.5,182.1 1463.5,184.6 1464.5,181.3 1465.5,181.1 1466.5,179.4 1467.5,182 1468.5,182.2 1469.5,186 1470.5,190.7 1471.5,187.9 1472.5,187.8 1473.5,184.9 1474.5,184.1 1475.5,180.1 1476.5,180.8 1477.5,184.1 1478.5,185.4 1479.5,186.3 1480.5,184.3 1481.5,184.4 1482.5,188.8 1483.5,185.9 1484.5,186.2 1485.5,189.5 1486.5,186.5 1487.5,186.9 1488.5,184.3 1489.5,189.8 1490.5,181.7 1491.5,183.1 1492.5,180.6 1493.5,185.5 1494.5,186 1495.5,187.2 1496.5,184.3 1497.5,187.2 1498.5,186.1 1499.5,185 1500.5,183 1501.5,184.2 1502.5,186.1 1503.5,187.6 1504.5,187.1 1505.5,186.2 1506.5,180.9 1507.5,184.3 1508.5,182.7 1509.5,186.1 1510.5,187.8 1511.5,185.5 1512.5,184.6 1513.5,189.5 1514.5,187.6 1515.5,184.1 1516.5,179.6 1517.5,186.6 1518.5,186.6 1519.5,186.2 1520.5,184.2 1521.5,182.3 1522.5,177.9 1523.5,181.1 1524.5,179.8 1525.5,183 1526.5,183 1527.5,182.9 1528.5,176.9 1529.5,180.3 1530.5,179.4 1531.5,178.8 1532.5,180.8 1533.5,180.7 1534.5,174.1 1535.5,179.7 1536.5,180.3 1537.5,182.3 1538.5,185.9 1539.5,181.9 1540.5,185.5 1541.5,182.4 1542.5,182.5 1543.5,189.6 1544.5,190.5 1545.5,186 1546.5,187.1 1547.5,184.6 1548.5,184 1549.5,186.2 1550.5,187.9 1551.5,180.3 1552.5,184 1553.5,183.6 1554.5,186.2 1555.5,185.6 1556.5,182.1 1557.5,185.7 1558.5,189 1559.5,185 1560.5,183.3 1561.5,185.3 1562.5,182.8 1563.5,186.8 1564.5,182.1 1565.5,185.7 1566.5,185.7 1567.5,180.1 1568.5,180.4 1569.5,183.5 1570.5,181.8 1571.5,181.9 1572.5,178.2 1573.5,183.1 1574.5,180.3 1575.5,176.5 1576.5,178.9 1577.5,180.8 1578.5,186.4 1579.5,184.2 1580.5,182.7 1581.5,187.9 1582.5,183.8 1583.5,183.7 1584.5,183.8 1585.5,183.4 1586.5,188.5 1587.5,183.3 1588.5,182.9 1589.5,182.5 1590.5,187.2 1591.5,184.4 1592.5,188.7 1593.5,187.5 1594.5,187.5 1595.5,184.9 1596.5,188.4 1597.5,189 1598.5,187.2 1599.5,186.5 1600.5,182.4 1601.5,184.8 1602.5,184.8 1603.5,185.6 1604.5,186.8 1605.5,179.5 1606.5,180.6 1607.5,181.2 1608.5,180.5 1609.5,180.3 1610.5,180.9 1611.5,180.2 1612.5,179.7 1613.5,184.2 1614.5,180.3 1615.5,177.7 1616.5,173.4 1617.5,178.1 1618.5,178.4 1619.5,181.8 1620.5,183.5 1621.5,180.2 1622.5,181.9 1623.5,182.1 1624.5,181.5 1625.5,181.6 1626.5,181.7 1627.5,183.5 1628.5,184.2 1629.5,183.6 1630.5,189.2 1631.5,187.2 1632.5,184.4 1633.5,180.3 1634.5,184.4 1635.5,185.1 1636.5,185.1 1637.5,184.4 1638.5,181.5 1639.5,182.9 1640.5,184.6 1641.5,186.7 1642.5,186.7 1643.5,185.3 1644.5,186.3 1645.5,183.9 1646.5,181.2 1647.5,184.5 1648.5,184.4 1649.5,185.8 1650.5,184.5 1651.5,180.4 1652.5,179.2 1653.5,184.2 1654.5,181.1 1655.5,184.8 1656.5,182.9 1657.5,185.1 1658.5,183.7 1659.5,181.3 1660.5,181.6 1661.5,184.3 1662.5,186.9 1663.5,187.4 1664.5,186.9 1665.5,184.3 1666.5,186.9 1667.5,191.3 1668.5,184.3 1669.5,186.3 1670.5,190.9 1671.5,187.4 1672.5,182.8 1673.5,183.9 1674.5,180.5 1675.5,184.3 1676.5,187 1677.5,189.4 1678.5,183.9 1679.5,189.5 1680.5,189.4 1681.5,185.1 1682.5,187.6 1683.5,189.7 1684.5,183.9 1685.5,186 1686.5,186.4 1687.5,183.6 1688.5,186.6 1689.5,186.7 1690.5,189.1 1691.5,186.8 1692.5,181.8 1693.5,180.4 1694.5,183.4 1695.5,183.5 1696.5,185.4 1697.5,185.1 1698.5,186.9 1699.5,180.4 1700.5,182.1 1701.5,183.2 1702.5,184.3 1703.5,184.8 1704.5,183.1 1705.5,178.9 1706.5,178.3 1707.5,181.2 1708.5,185.1 1709.5,180.7 1710.5,179.9 1711.5,181 1712.5,183.1 1713.5,180.9 1714.5,180.3 1715.5,181.7 1716.5,188.3 1717.5,194.3 1718.5,199.2 1719.5,200.6 1720.5,204.5 1721.5,206.6 1722.5,207.7 1723.5,207.7 1724.5,209 1725.5,209.9 1726.5,210.6 1727.5,212 1728.5,209.6 1729.5,208.6 1730.5,210.7 1731.5,208 1732.5,207.7 1733.5,207.3 1734.5,206.3 1735.5,205.8 1736.5,205.7 1737.5,204.4 1738.5,203.3 1739.5,202.6 1740.5,202.8 1741.5,201.9 1742.5,201.7 1743.5,200.8 1744.5,201.4 1745.5,200.9 1746.5,200.7 1747.5,199.6 1748.5,199.7 1749.5,199.3 1750.5,198.7 1751.5,198.5 1752.5,198.2 1753.5,196.8 1754.5,195.6 1755.5,195.8 1756.5,195.5 1757.5,194.6 1758.5,195.2 1759.5,195.8 1760.5,195 1761.5,194 1762.5,193.4 1763.5,192.8 1764.5,192 1765.5,193.6 1766.5,193 1767.5,191.2 1768.5,191 1769.5,190.8 1770.5,190.3 1771.5,190.4 1772.5,190.2 1773.5,190.3 1774.5,189.7 1775.5,188.8 1776.5,187.8 1777.5,187.2 1778.5,186.5 1779.5,185.3 1780.5,186 1781.5,186.8 1782.5,185.4 1783.5,184.9 1784.5,184.9 1785.5,183.5 1786.5,183 1787.5,184.1 1788.5,184 1789.5,183.6 1790.5,182.1 1791.5,182.5 1792.5,182.6 1793.5,182.3 1794.5,181.3 1795.5,179.8 1796.5,178.2 1797.5,177.8 1798.5,176.2 1799.5,177.1 1800.5,176.6 1801.5,175.9 1802.5,176 1803.5,176.8 1804.5,176.4 1805.5,177.1 1806.5,177 1807.5,175.7 1808.5,175.5 1809.5,175.9 1810.5,175.5 1811.5,175.2 1812.5,174.6 1813.5,174.8 1814.5,175.6 1815.5,176.3 1816.5,176.4 1817.5,175.2 1818.5,174.9 1819.5,174.7 1820.5,172.6 1821.5,172.9 1822.5,172.6 1823.5,173.7 1824.5,174.3 1825.5,173.4 1826.5,173.7 1827.5,172.9 1828.5,171.2 1829.5,170.6 1830.5,170.7 1831.5,171 1832.5,169.4 1833.5,171 1834.5,170.3 1835.5,171.2 1836.5,172.1 1837.5,169.8 1838.5,169 1839.5,169.5 1840.5,168.8 1841.5,169.2 1842.5,169.8" fill="none" stroke="#f0f0f0" stroke-width="1.5" stroke-linejoin="round"/>
<path d="M1337.4,82V270" stroke="#e6e640" stroke-width="1.2"/>
<text x="815.4" y="87.6" font-size="16" text-anchor="end">40.0</text>
<text x="815.4" y="126.1" font-size="16" text-anchor="end">20.0</text>
<text x="815.4" y="163.1" font-size="16" text-anchor="end">0.0</text>
<text x="815.4" y="201.1" font-size="16" text-anchor="end">-20.0</text>
<text x="815.4" y="239.1" font-size="16" text-anchor="end">-40.0</text>
<text x="815.4" y="275.1" font-size="16" text-anchor="end">-60.0</text>
<text x="910.5" y="289.2" font-size="16" text-anchor="middle">179.2</text>
<text x="1009.5" y="289.2" font-size="16" text-anchor="middle">179.4</text>
<text x="1108.5" y="289.2" font-size="16" text-anchor="middle">179.6</text>
<text x="1207.5" y="289.2" font-size="16" text-anchor="middle">179.8</text>
<text x="1306.5" y="289.2" font-size="16" text-anchor="middle">180</text>
<text x="1404.5" y="289.2" font-size="16" text-anchor="middle">180.2</text>
<text x="1503.5" y="289.2" font-size="16" text-anchor="middle">180.4</text>
<text x="1602.5" y="289.2" font-size="16" text-anchor="middle">180.6</text>
<text x="1701.5" y="289.2" font-size="16" text-anchor="middle">180.8</text>
<text x="1799.5" y="289.2" font-size="16" text-anchor="middle">181</text>
<text x="1337" y="316.2" font-size="20" text-anchor="middle">Frequency (MHz)</text>
<text transform="translate(749.2,175.7) rotate(-90)" font-size="20" text-anchor="middle">Magnitude (dB)</text>
</svg>
<div class="b" style="left:0px;top:333px;width:1889px;height:6px;background:#808080;"></div>
<div class="b" style="left:0px;top:339px;width:1889px;height:49px;background:#262626;"></div>
<div class="b" style="left:118px;top:339px;width:549px;height:49px;background:#333333;"></div>
<div class="b" style="left:117px;top:339px;width:1px;height:49px;background:#e8e8e8;"></div>
<div class="b" style="left:118px;top:339px;width:131.2px;height:49px;background:#ac1818;"></div>
<div class="b" style="left:667px;top:339px;width:3.1px;height:49px;background:#f4f4f4;"></div>
<div class="b" style="left:0px;top:388px;width:1889px;height:1px;background:#cfdcec;"></div>
<div class="b" style="left:29.7px;top:352.4px;width:74.3px;height:26.4px;background:transparent;box-sizing:border-box;border:1px solid #707070;border-radius:3px;"></div>
<span class="t" style="left:31.96px;top:358px;font-size:15px;color:#fff;transform:scaleX(1.0644);">5D</span>
<svg class="b" style="left:76.8px;top:362px;width:14px;height:8px" viewBox="0 0 14 8"><path d="M0.3,0.3H13.2L6.75,7.2z" fill="#fff"/></svg>
<span class="t" style="left:136.12px;top:357px;font-size:19px;color:#ff6868;transform:scaleX(0.9762);">EId: 11F7</span>
<span class="t" style="left:241.05px;top:357px;font-size:19px;color:#e8f038;transform:scaleX(0.9952);"><span style="color:#ff8a30">2</span>. BMUx Test</span>
<span class="t" style="left:377.79px;top:357px;font-size:19px;color:#fff;transform:scaleX(1.0641);">2020-09-14</span>
<span class="t" style="left:491.24px;top:357px;font-size:19px;color:#fff;">07:55:20 Z</span>
<div class="b" style="left:683px;top:352px;width:31px;height:26.8px;background:transparent;box-sizing:border-box;border:1px solid #8c8c8c;border-radius:3px;"></div>
<svg class="b" style="left:691.2px;top:362px;width:14px;height:8px" viewBox="0 0 14 8"><path d="M0.3,0.3H13.2L6.75,7.2z" fill="#fff"/></svg>
<div class="b" style="left:743.7px;top:352px;width:28.6px;height:28.6px;background:#266ea5;border-radius:50%;"></div>
<div class="b" style="left:751.7px;top:360px;width:12.6px;height:12.6px;background:#ff0000;border-radius:50%;"></div>
<div class="b" style="left:787.8px;top:352.3px;width:28px;height:28px;background:#24507a;border-radius:50%;"></div>
<div class="b" style="left:796px;top:360px;width:10.9px;height:12.8px;background:#0a0f16;"></div>
<div class="b" style="left:1837.5px;top:350.2px;width:60px;height:26.6px;background:transparent;box-sizing:border-box;border:1px solid #8c8c8c;border-radius:3px;"></div>
<span class="t" style="left:1838.79px;top:357px;font-size:14.5px;color:#fff;transform:scaleX(1.039);">DAB</span>
<svg class="b" style="left:1883px;top:361.5px;width:14px;height:8px" viewBox="0 0 14 8"><path d="M0.3,0.3H13.2L6.75,7.2z" fill="#fff"/></svg>
<div class="b" style="left:0px;top:389px;width:214px;height:43px;background:#0e2e54;"></div>
<div class="b" style="left:0px;top:432px;width:214px;height:542px;background:#1b5886;"></div>
<div class="b" style="left:0;top:389px;width:214px;height:43px;overflow:hidden"><span class="t" style="left:2.87px;top:11px;font-size:24px;color:#f0ff30;transform:scaleX(1.1106);">No Service Select</span></div>
<span class="t" style="left:4.82px;top:442px;font-size:19.5px;color:#fff;transform:scaleX(1.0113);">Programm 1</span>
<div class="b" style="left:214px;top:389px;width:6.4px;height:585px;background:#e9e9e9;"></div>
<div class="b" style="left:220.4px;top:389px;width:226.2px;height:43px;background:#0e2e54;"></div>
<div class="b" style="left:220.4px;top:432px;width:226.2px;height:542px;background:#1b5886;"></div>
<span class="t" style="left:225.79px;top:399px;font-size:24px;color:#fff;transform:scaleX(1.1215);">Service Quality</span>
<div class="b" style="left:446.6px;top:389px;width:4.8px;height:585px;background:#bccadc;box-shadow:inset 0.7px 0 0 #1a4c78,inset -0.7px 0 0 #143e62;"></div>
<span class="t" style="left:232.66px;top:454px;font-size:17.5px;color:#fff;transform:scaleX(0.9346);">SNR (dB)</span>
<div class="b" style="left:383.4px;top:446px;width:49.8px;height:31px;background:#868686;"></div>
<div class="b" style="left:383.4px;top:446px;width:11.3px;height:31px;background:#ff0000;"></div>
<span class="t" style="left:383.4px;top:454px;width:49.8px;text-align:center;font-size:14.6px;color:#fff;letter-spacing:-0.5px">8.3</span>
<span class="t" style="left:233.18px;top:493px;font-size:17.5px;color:#fff;transform:scaleX(0.9431);">FIC (ok %)</span>
<div class="b" style="left:383.4px;top:484.6px;width:49.8px;height:31px;background:#868686;"></div>
<div class="b" style="left:383.4px;top:484.6px;width:50px;height:31px;background:#008000;"></div>
<span class="t" style="left:383.4px;top:492.6px;width:49.8px;text-align:center;font-size:14.6px;color:#fff;letter-spacing:-0.5px">100</span>
<span class="t" style="left:233.2px;top:532px;font-size:17.5px;color:#fff;transform:scaleX(0.9293);">RS (ok %)</span>
<div class="b" style="left:383.4px;top:523.2px;width:49.8px;height:31px;background:#868686;"></div>
<span class="t" style="left:233.08px;top:570px;font-size:17.5px;color:#fff;transform:scaleX(1.0107);">Null Symbol</span>
<div class="b" style="left:383.4px;top:561.6px;width:49.8px;height:31px;background:#868686;"></div>
<div class="b" style="left:383.4px;top:561.6px;width:50px;height:31px;background:#008000;"></div>
<span class="t" style="left:232.63px;top:608px;font-size:17.5px;color:#fff;transform:scaleX(0.9809);">SymbolTime (ms)</span>
<div class="b" style="left:383.4px;top:600px;width:49.8px;height:31px;background:#868686;"></div>
<div class="b" style="left:383.4px;top:600px;width:5.4px;height:31px;background:#008000;"></div>
<span class="t" style="left:383.4px;top:608px;width:49.8px;text-align:center;font-size:14.6px;color:#fff;letter-spacing:-0.5px">0.18</span>
<span class="t" style="left:233.15px;top:646px;font-size:17.5px;color:#fff;transform:scaleX(0.9622);">FrameTime (ms)</span>
<div class="b" style="left:383.4px;top:638.6px;width:49.8px;height:31px;background:#868686;"></div>
<div class="b" style="left:383.4px;top:638.6px;width:31.8px;height:31px;background:#008000;"></div>
<span class="t" style="left:383.4px;top:646.6px;width:49.8px;text-align:center;font-size:14.6px;color:#fff;letter-spacing:-0.5px">96.0</span>
<div class="b" style="left:451.4px;top:389px;width:465.6px;height:43px;background:#0e2e54;"></div>
<div class="b" style="left:451.4px;top:432px;width:465.6px;height:542px;background:#1b5886;"></div>
<div class="b" style="left:917px;top:389px;width:6.3px;height:585px;background:#eef0f2;"></div>
<div class="b" style="left:460.8px;top:398px;width:74.6px;height:34px;background:#868686;box-sizing:border-box;border-radius:5px 13px 0 0;border:1px solid #979797;border-bottom:none;"></div><span class="t" style="left:476.42px;top:407px;font-size:21px;color:#dadada;transform:scaleX(0.9325);">Sync</span>
<div class="b" style="left:536.4px;top:398px;width:54.2px;height:34px;background:#1b5886;box-sizing:border-box;border-radius:5px 13px 0 0;border:1px solid #2d6a9c;border-bottom:none;"></div><span class="t" style="left:552.1px;top:407px;font-size:21px;color:#fff;transform:scaleX(0.9614);">TII</span>
<div class="b" style="left:591px;top:398px;width:87.5px;height:34px;background:#868686;box-sizing:border-box;border-radius:5px 13px 0 0;border:1px solid #979797;border-bottom:none;"></div><span class="t" style="left:607.6px;top:407px;font-size:21px;color:#dadada;transform:scaleX(1.0357);">Audio</span>
<div class="b" style="left:679.3px;top:398px;width:72.1px;height:34px;background:#868686;box-sizing:border-box;border-radius:5px 13px 0 0;border:1px solid #979797;border-bottom:none;"></div><span class="t" style="left:696px;top:407px;font-size:21px;color:#dadada;transform:scaleX(0.9123);">AAC</span>
<div class="b" style="left:752px;top:398px;width:106.8px;height:34px;background:#868686;box-sizing:border-box;border-radius:5px 13px 0 0;border:1px solid #979797;border-bottom:none;"></div><span class="t" style="left:767.53px;top:407px;font-size:21px;color:#dadada;transform:scaleX(1.0316);">Options</span>
<div class="b" style="left:494.1px;top:445.5px;width:11px;height:11px;background:#ff0000;border-radius:50%;"></div>
<div class="b" style="left:530.9px;top:445.2px;width:10.7px;height:11.7px;background:#0e2a48;"></div>
<div class="b" style="left:469px;top:468.6px;width:310px;height:1px;background:#86a6c6;"></div>
<div class="b" style="left:790.6px;top:432px;width:1px;height:39px;background:#5f8db8;"></div>
<span class="t" style="left:798.35px;top:456px;font-size:18px;color:#fff;transform:scaleX(0.9595);">Threshold</span>
<span class="t" style="left:468.49px;top:494px;font-size:18px;color:#fff;transform:scaleX(1.0462);">Pattern</span>
<span class="t" style="left:552.72px;top:494px;font-size:18px;color:#fff;transform:scaleX(1.0975);">MainId</span>
<span class="t" style="left:635.56px;top:494px;font-size:18px;color:#fff;transform:scaleX(1.0356);">SubId</span>
<span class="t" style="left:707.94px;top:494px;font-size:18px;color:#fff;transform:scaleX(1.0581);">Strength</span>
<div class="b" style="left:469px;top:514.1px;width:310px;height:1px;background:#9ab6d2;"></div>
<span class="t" style="left:471.02px;top:531px;font-size:18px;color:#fff;transform:scaleX(0.9454);">0xac</span>
<span class="t" style="left:555.27px;top:531px;font-size:18px;color:#fff;transform:scaleX(1.0199);">50</span>
<span class="t" style="left:637.57px;top:531px;font-size:18px;color:#fff;transform:scaleX(1.1477);">2</span>
<span class="t" style="left:710.33px;top:531px;font-size:18px;color:#fff;transform:scaleX(0.9324);">0.63</span>
<span class="t" style="left:471.01px;top:563px;font-size:18px;color:#fff;transform:scaleX(0.9539);">0xa5</span>
<span class="t" style="left:555.13px;top:563px;font-size:18px;color:#fff;transform:scaleX(1.0317);">46</span>
<span class="t" style="left:637.81px;top:563px;font-size:18px;color:#fff;transform:scaleX(1.0994);">3</span>
<span class="t" style="left:710.32px;top:563px;font-size:18px;color:#fff;transform:scaleX(0.9434);">0.22</span>
<div class="b" style="left:831.4px;top:495.6px;width:2.8px;height:134px;background:#dcdcdc;border-radius:1.4px;"></div>
<div class="b knob nr" style="left:824.8px;top:628px;width:16px;height:16px"></div>
<span class="t" style="left:814.82px;top:655px;font-size:18px;color:#fff;transform:scaleX(0.9434);">0.02</span>
<div class="b" style="left:923.3px;top:389px;width:966px;height:25px;background:#0e2e54;"></div>
<div class="b" style="left:923.3px;top:414px;width:966px;height:260.5px;background:#000;"></div>
<span class="t" style="left:1286.91px;top:393px;font-size:17.5px;color:#fff;transform:scaleX(1.0212);">Channel Impulse Response (CIR)</span>
<svg class="b" style="left:1869px;top:389px;width:20px;height:25px" viewBox="1869 389 20 25"><path d="M1874.6,395.3H1889.5L1882,408.8z" fill="none" stroke="#c8dcf0" stroke-width="1.1"/></svg>
<div class="b" style="left:923.3px;top:674.3px;width:966px;height:6.7px;background:#808080;"></div>
<svg class="b" style="left:1135px;top:415px;width:754px;height:259px" viewBox="1135 415 754 259" font-family="Liberation Sans, Arial, sans-serif" fill="#fff"><rect x="1246.5" y="434" width="136.9" height="184.5" fill="#3e3e3e"/><path d="M1246.5,471.5H1865.5M1246.5,508.5H1865.5M1246.5,545.5H1865.5M1246.5,582.5H1865.5M1274.5,434V618.5M1315.5,434V618.5M1357.5,434V618.5M1398.5,434V618.5M1439.5,434V618.5M1481.5,434V618.5M1522.5,434V618.5M1564.5,434V618.5M1605.5,434V618.5M1646.5,434V618.5M1688.5,434V618.5M1729.5,434V618.5M1770.5,434V618.5M1812.5,434V618.5M1853.5,434V618.5" stroke="#969696" stroke-width="1" fill="none"/><rect x="1246.5" y="434" width="619" height="184.5" stroke="#a2a2a2" stroke-width="2" fill="none"/><path d="M1383.5,434V618.5" stroke="#e8e040" stroke-width="1.2" stroke-dasharray="1.2,1.3"/><polyline points="1247,547.2 1248,544.4 1249,544.4 1250,547.2 1251,550.5 1252,561.9 1253,572.2 1254,572.7 1255,578.7 1256,591 1257,599.7 1258,590.5 1259,575 1260,570.1 1261,575.1 1262,577 1263,574.8 1264,580.5 1265,584.2 1266,585.2 1267,589.7 1268,589.7 1269,589.8 1270,598.3 1271,591.6 1272,581.5 1273,573.2 1274,572 1275,574 1276,568.6 1277,574.1 1278,584.7 1279,586.9 1280,590.6 1281,587.2 1282,587.5 1283,589.7 1284,587.9 1285,588.6 1286,588 1287,586.2 1288,583.9 1289,578.4 1290,574.9 1291,582.8 1292,590 1293,585.8 1294,587.5 1295,595.2 1296,597.5 1297,591.3 1298,581.1 1299,571 1300,571.2 1301,589.4 1302,605.2 1303,609.9 1304,607.4 1305,596.7 1306,591.5 1307,589.5 1308,579.4 1309,574.2 1310,588.3 1311,602.8 1312,606.9 1313,605.8 1314,600.2 1315,591.2 1316,582.5 1317,577 1318,572.1 1319,583 1320,593.9 1321,588.8 1322,586.5 1323,593.2 1324,599.4 1325,585 1326,584.6 1327,594.5 1328,593.2 1329,598 1330,605.5 1331,611.4 1332,604.1 1333,601.7 1334,600.6 1335,593 1336,588.1 1337,592.1 1338,599.5 1339,598.6 1340,593.5 1341,600.9 1342,597.5 1343,599.3 1344,600.8 1345,594.7 1346,582.3 1347,579.6 1348,582.7 1349,577.9 1350,580.3 1351,583.3 1352,582.6 1353,578.9 1354,580.1 1355,584.9 1356,580.7 1357,571 1358,564 1359,571.6 1360,582 1361,584.3 1362,586.6 1363,590.3 1364,585.1 1365,580.9 1366,576.7 1367,571.6 1368,571.2 1369,578.6 1370,588.9 1371,585.9 1372,581.9 1373,583.2 1374,577.6 1375,576.4 1376,571.6 1377,576 1378,583.5 1379,592 1380,587.8 1381,575 1382,545 1383,506 1384,506 1385,515.6 1386,527.6 1387,539.6 1388,560.4 1389,569 1390,567.3 1391,559.5 1392,554.8 1393,560.7 1394,557.5 1395,551 1396,542.7 1397,522.7 1398,492.1 1399,469.4 1400,488.3 1401,513.8 1402,533 1403,542.3 1404,546.9 1405,551.4 1406,554.5 1407,553.7 1408,553.7 1409,564.6 1410,571.7 1411,571.8 1412,575.9 1413,584.6 1414,582.6 1415,573.2 1416,574.5 1417,579.5 1418,573.4 1419,562.7 1420,565.4 1421,574.6 1422,579 1423,582 1424,586.6 1425,592.6 1426,596.3 1427,601.8 1428,589.3 1429,576.1 1430,575.4 1431,581.8 1432,574.8 1433,564.7 1434,566.2 1435,575 1436,581.9 1437,571.8 1438,573.2 1439,580 1440,592.4 1441,599.1 1442,594.7 1443,587.8 1444,582.1 1445,579.1 1446,577.5 1447,575.8 1448,573.5 1449,577 1450,574.8 1451,578.5 1452,577.2 1453,576.3 1454,574.2 1455,564.1 1456,557.7 1457,560.1 1458,573.8 1459,568.4 1460,563.2 1461,569.4 1462,574.7 1463,582.1 1464,579.9 1465,562.7 1466,570.3 1467,585.2 1468,583.2 1469,578.9 1470,582.1 1471,586.7 1472,583.6 1473,585.5 1474,588.8 1475,588.6 1476,588.4 1477,585.6 1478,579 1479,590.8 1480,589.1 1481,579.8 1482,588 1483,589.6 1484,582.6 1485,583.7 1486,585.2 1487,578 1488,575.4 1489,579.5 1490,579.9 1491,572.8 1492,566.9 1493,567.4 1494,569.9 1495,570.2 1496,572.9 1497,579.9 1498,588.2 1499,592.6 1500,586.9 1501,576.7 1502,582.1 1503,583.5 1504,575.9 1505,569.7 1506,574.5 1507,578.3 1508,577.9 1509,570.6 1510,557.9 1511,558.3 1512,560.2 1513,568.3 1514,572.2 1515,563.6 1516,561.1 1517,568.2 1518,580 1519,579.7 1520,573 1521,569.9 1522,573.5 1523,571.8 1524,573 1525,576.5 1526,570.8 1527,565.3 1528,565.2 1529,571.4 1530,569.3 1531,561.1 1532,568.8 1533,578.2 1534,581.5 1535,572.1 1536,570.3 1537,573.9 1538,573.2 1539,580.3 1540,575 1541,574.4 1542,580.3 1543,584.5 1544,587.6 1545,581.7 1546,589.4 1547,596.2 1548,591.2 1549,584.2 1550,581.6 1551,585.7 1552,593.5 1553,595.1 1554,584.8 1555,579.8 1556,577.4 1557,574 1558,565.4 1559,530 1560,521.6 1561,554 1562,572.6 1563,575.7 1564,573.3 1565,576.7 1566,581.4 1567,583.1 1568,592.4 1569,592.7 1570,590.9 1571,588.5 1572,595.8 1573,594.2 1574,586.3 1575,595.8 1576,597.7 1577,597.1 1578,594.2 1579,590 1580,581.5 1581,580.1 1582,582.8 1583,575.8 1584,562 1585,562.7 1586,565.2 1587,570.3 1588,577.9 1589,571.4 1590,567.2 1591,573.3 1592,578.3 1593,571.8 1594,563.6 1595,568.7 1596,583.9 1597,587.9 1598,586.7 1599,591.4 1600,594.1 1601,599.1 1602,591.1 1603,595.3 1604,598.1 1605,591.9 1606,590.7 1607,593.8 1608,597.8 1609,599.3 1610,593 1611,587.9 1612,587.5 1613,588.4 1614,591.6 1615,587 1616,587.7 1617,592.8 1618,595.1 1619,593.7 1620,590.4 1621,586.1 1622,596.9 1623,601.8 1624,591.7 1625,591 1626,600.7 1627,608.9 1628,607.2 1629,604.6 1630,598.9 1631,586 1632,582.5 1633,587.1 1634,590.9 1635,598.8 1636,597.7 1637,591.3 1638,589 1639,588 1640,593.2 1641,594.2 1642,596.6 1643,606.7 1644,611.8 1645,594.2 1646,579.3 1647,582.1 1648,582.2 1649,583.4 1650,583.2 1651,578.2 1652,581.1 1653,592.7 1654,595.2 1655,589.5 1656,595.4 1657,601.2 1658,601.9 1659,596.9 1660,590.5 1661,597.3 1662,596.5 1663,592 1664,593 1665,593.9 1666,590 1667,590.8 1668,591.4 1669,584.5 1670,583.8 1671,583.6 1672,593.9 1673,599 1674,597.4 1675,595.4 1676,590.1 1677,600.2 1678,595.4 1679,587.9 1680,586 1681,590.4 1682,588.1 1683,584.2 1684,589.3 1685,590.9 1686,581.3 1687,573.7 1688,575.4 1689,581.9 1690,598.7 1691,611.1 1692,616.4 1693,615.7 1694,613.1 1695,597.7 1696,588.9 1697,586.5 1698,595.9 1699,598.4 1700,591.3 1701,594.2 1702,597.8 1703,600.6 1704,596.8 1705,588.1 1706,593.1 1707,593.5 1708,595.2 1709,592.8 1710,593.8 1711,591.8 1712,586.1 1713,591.9 1714,597 1715,598.4 1716,596.6 1717,593.2 1718,590.4 1719,590.3 1720,581 1721,571 1722,572.7 1723,580.9 1724,580 1725,583.8 1726,599 1727,595.6 1728,588.2 1729,584 1730,595 1731,600.5 1732,588.1 1733,580.3 1734,590.9 1735,596.6 1736,594 1737,593.1 1738,588.7 1739,585.4 1740,577.7 1741,580.9 1742,594 1743,595.6 1744,587.7 1745,588.8 1746,589.6 1747,583.5 1748,583.8 1749,585.7 1750,582.4 1751,575.1 1752,569.8 1753,577.1 1754,584.8 1755,590.3 1756,592.5 1757,585.8 1758,577.8 1759,583.2 1760,594.1 1761,590.8 1762,589.5 1763,580.3 1764,579.7 1765,586 1766,577.4 1767,576.9 1768,581.5 1769,584.8 1770,580.5 1771,583.7 1772,596.1 1773,593.2 1774,582.9 1775,578 1776,584.9 1777,592.4 1778,577.9 1779,571.1 1780,569.4 1781,574.6 1782,583.7 1783,592.7 1784,599.9 1785,592.2 1786,588.7 1787,588 1788,593.3 1789,587 1790,584.8 1791,582.9 1792,582.8 1793,582.3 1794,575.3 1795,574.3 1796,578.7 1797,588.2 1798,597.1 1799,590.1 1800,587.5 1801,592 1802,583.5 1803,579 1804,581.1 1805,587.5 1806,586 1807,588.5 1808,594.8 1809,590.3 1810,573.5 1811,576.8 1812,574.4 1813,565.1 1814,564.7 1815,557.4 1816,559.2 1817,565.8 1818,568.1 1819,562.8 1820,560.9 1821,570 1822,575.4 1823,580.6 1824,586.9 1825,592.1 1826,591.1 1827,586.7 1828,586.5 1829,577.9 1830,570.9 1831,573.1 1832,567.3 1833,568.8 1834,567.5 1835,562.3 1836,567.7 1837,577.1 1838,584.9 1839,580.9 1840,569.4 1841,573.1 1842,582.8 1843,588.3 1844,578.5 1845,570.2 1846,575.9 1847,580.8 1848,581 1849,570.2 1850,571.4 1851,553.4 1852,546.6 1853,546.8 1854,548.9 1855,551.5 1856,538.5 1857,524.7 1858,499.1 1859,476.5 1860,479.2 1861,500.1 1862,518.9 1863,532.9 1864,535.7 1865,541.1" fill="none" stroke="#f0f0f0" stroke-width="1.4" stroke-linejoin="round"/><circle cx="1399" cy="469.4" r="4.7" fill="#f8f020"/><circle cx="1383.3" cy="505.6" r="4.7" fill="#e81420"/><circle cx="1559.7" cy="514.9" r="4.7" fill="#1e9ce2"/><text x="1235.4" y="439.7" font-size="16" text-anchor="end">-10.0</text><text x="1235.4" y="477.2" font-size="16" text-anchor="end">-20.0</text><text x="1235.4" y="514.2" font-size="16" text-anchor="end">-30.0</text><text x="1235.4" y="551.2" font-size="16" text-anchor="end">-40.0</text><text x="1235.4" y="588.2" font-size="16" text-anchor="end">-50.0</text><text x="1235.4" y="624.2" font-size="16" text-anchor="end">-60.0</text><text x="1274.5" y="635.4" font-size="13.3" text-anchor="middle">-60</text><text x="1315.5" y="635.4" font-size="13.3" text-anchor="middle">-40</text><text x="1357.5" y="635.4" font-size="13.3" text-anchor="middle">-20</text><text x="1398.5" y="635.4" font-size="13.3" text-anchor="middle">0</text><text x="1439.5" y="635.4" font-size="13.3" text-anchor="middle">20</text><text x="1481.5" y="635.4" font-size="13.3" text-anchor="middle">40</text><text x="1522.5" y="635.4" font-size="13.3" text-anchor="middle">60</text><text x="1564.5" y="635.4" font-size="13.3" text-anchor="middle">80</text><text x="1605.5" y="635.4" font-size="13.3" text-anchor="middle">100</text><text x="1646.5" y="635.4" font-size="13.3" text-anchor="middle">120</text><text x="1688.5" y="635.4" font-size="13.3" text-anchor="middle">140</text><text x="1729.5" y="635.4" font-size="13.3" text-anchor="middle">160</text><text x="1770.5" y="635.4" font-size="13.3" text-anchor="middle">180</text><text x="1812.5" y="635.4" font-size="13.3" text-anchor="middle">200</text><text x="1853.5" y="635.4" font-size="13.3" text-anchor="middle">220</text><text x="1556" y="658.6" font-size="17" text-anchor="middle">Distance Difference (km)</text><text transform="translate(1176,527) rotate(-90)" font-size="15.5" font-weight="bold" text-anchor="middle">Magnitude (dB)</text></svg>
<div class="b" style="left:935.9px;top:429.3px;width:16px;height:16px;background:#e4e4e4;border-radius:50%;"></div>
<span class="t" style="left:956.07px;top:430px;font-size:15.5px;color:#fff;transform:scaleX(0.9142);">Freeze</span>
<div class="b" style="left:1024.8px;top:429.3px;width:16px;height:16px;background:#e4e4e4;border-radius:50%;"></div>
<span class="t" style="left:1045.45px;top:430px;font-size:15.5px;color:#fff;transform:scaleX(0.9643);">Gradient</span>
<span class="t" style="left:941.22px;top:482px;font-size:15.5px;color:#fff;transform:scaleX(0.971);">Smoothing Level</span>
<div class="b" style="left:944.1px;top:504.5px;width:1.2px;height:4.5px;background:#b4b4b4;"></div><div class="b" style="left:960.41px;top:504.5px;width:1.2px;height:4.5px;background:#b4b4b4;"></div><div class="b" style="left:976.72px;top:504.5px;width:1.2px;height:4.5px;background:#b4b4b4;"></div><div class="b" style="left:993.03px;top:504.5px;width:1.2px;height:4.5px;background:#b4b4b4;"></div><div class="b" style="left:1009.34px;top:504.5px;width:1.2px;height:4.5px;background:#b4b4b4;"></div><div class="b" style="left:1025.65px;top:504.5px;width:1.2px;height:4.5px;background:#b4b4b4;"></div><div class="b" style="left:1041.96px;top:504.5px;width:1.2px;height:4.5px;background:#b4b4b4;"></div><div class="b" style="left:1058.27px;top:504.5px;width:1.2px;height:4.5px;background:#b4b4b4;"></div><div class="b" style="left:1074.58px;top:504.5px;width:1.2px;height:4.5px;background:#b4b4b4;"></div><div class="b" style="left:1090.89px;top:504.5px;width:1.2px;height:4.5px;background:#b4b4b4;"></div><div class="b" style="left:1107.2px;top:504.5px;width:1.2px;height:4.5px;background:#b4b4b4;"></div>
<div class="b" style="left:936px;top:516.4px;width:172px;height:3.2px;background:#e8e8e8;border-radius:1.5px;"></div>
<div class="b knob" style="left:1001.5px;top:509.9px;width:17px;height:17px"></div>
<span class="t" style="left:941.45px;top:549px;font-size:15.5px;color:#fff;transform:scaleX(0.9724);">Zoom X</span>
<div class="b" style="left:944px;top:578.7px;width:164px;height:3.2px;background:#e8e8e8;border-radius:1.5px;"></div>
<div class="b knob" style="left:935.8px;top:572.3px;width:17px;height:17px"></div>
<span class="t" style="left:941.45px;top:611px;font-size:15.5px;color:#fff;transform:scaleX(0.9687);">Zoom Y</span>
<div class="b" style="left:944px;top:641.2px;width:164px;height:3.2px;background:#e8e8e8;border-radius:1.5px;"></div>
<div class="b knob" style="left:935.8px;top:634.7px;width:17px;height:17px"></div>
<div class="b" style="left:1116px;top:416px;width:6px;height:186px;background:#a6a6a6;border-radius:3px;"></div>
<div class="b" style="left:1129px;top:414.5px;width:1px;height:260px;background:#2e2e2e;"></div>
<div class="b" style="left:923.3px;top:681px;width:966px;height:25px;background:#0e2e54;"></div>
<div class="b" style="left:923.3px;top:706px;width:966px;height:262px;background:#000;"></div>
<div class="b" style="left:923.3px;top:968px;width:966px;height:6px;background:#808080;"></div>
<span class="t" style="left:1376.15px;top:685px;font-size:17.5px;color:#fff;transform:scaleX(1.0111);">TII Carriers</span>
<svg class="b" style="left:1869px;top:681px;width:20px;height:25px" viewBox="1869 681 20 25"><path d="M1874.6,686.8H1889.5L1882,700.3z" fill="none" stroke="#c8dcf0" stroke-width="1.1"/></svg>
<svg class="b" style="left:940px;top:706px;width:949px;height:262px" viewBox="940 706 949 262" font-family="Liberation Sans, Arial, sans-serif" fill="#fff"><path d="M1033,762.5H1857.5M1033,799.5H1857.5M1033,835.5H1857.5M1033,871.5H1857.5M1083.5,726.5V906.3M1164.5,726.5V906.3M1244.5,726.5V906.3M1325.5,726.5V906.3M1405.5,726.5V906.3M1486.5,726.5V906.3M1566.5,726.5V906.3M1647.5,726.5V906.3M1727.5,726.5V906.3M1807.5,726.5V906.3" stroke="#969696" stroke-width="1" fill="none"/><rect x="1033" y="726.5" width="824.5" height="179.8" stroke="#a2a2a2" stroke-width="2" fill="none"/><path d="M1034,904.4H1856.5" stroke="#cfcfcf" stroke-width="1"/><path d="M1136.9,905.3L1137.6,850L1139.3,905.3z" fill="#bdbdbd" stroke="#e2e2e2" stroke-width="0.9" stroke-linejoin="round"/><path d="M1138.5,905.3L1139,873L1140.8,905.3z" fill="#86c888" stroke="#90d292" stroke-width="0.5"/><path d="M1175.9,905.3L1176.6,832.5L1178.3,905.3z" fill="#bdbdbd" stroke="#e2e2e2" stroke-width="0.9" stroke-linejoin="round"/><path d="M1177.5,905.3L1178,869.7L1179.8,905.3z" fill="#86c888" stroke="#90d292" stroke-width="0.5"/><path d="M1215.2,905.3L1215.9,860.8L1217.6,905.3z" fill="#bdbdbd" stroke="#e2e2e2" stroke-width="0.9" stroke-linejoin="round"/><path d="M1234.2,905.3L1234.9,834.5L1236.6,905.3z" fill="#bdbdbd" stroke="#e2e2e2" stroke-width="0.9" stroke-linejoin="round"/><path d="M1235.8,905.3L1236.3,856.6L1238.1,905.3z" fill="#86c888" stroke="#90d292" stroke-width="0.5"/><path d="M1273,905.3L1273.7,827L1275.4,905.3z" fill="#bdbdbd" stroke="#e2e2e2" stroke-width="0.9" stroke-linejoin="round"/><path d="M1275.6,905.3L1276.1,889.4L1277.9,905.3z" fill="#86c888" stroke="#90d292" stroke-width="0.5"/><path d="M1291.9,905.3L1292.6,808.2L1294.3,905.3z" fill="#bdbdbd" stroke="#e2e2e2" stroke-width="0.9" stroke-linejoin="round"/><path d="M1293.5,905.3L1294,850.4L1295.8,905.3z" fill="#86c888" stroke="#90d292" stroke-width="0.5"/><path d="M1330.7,905.3L1331.4,801.7L1333.1,905.3z" fill="#bdbdbd" stroke="#e2e2e2" stroke-width="0.9" stroke-linejoin="round"/><path d="M1332.3,905.3L1332.8,854L1334.6,905.3z" fill="#86c888" stroke="#90d292" stroke-width="0.5"/><path d="M1369.9,905.3L1370.6,836.8L1372.3,905.3z" fill="#bdbdbd" stroke="#e2e2e2" stroke-width="0.9" stroke-linejoin="round"/><path d="M1388.7,905.3L1389.4,808.2L1391.1,905.3z" fill="#bdbdbd" stroke="#e2e2e2" stroke-width="0.9" stroke-linejoin="round"/><path d="M1390,905.3L1390.5,823.8L1392.3,905.3z" fill="#86c888" stroke="#90d292" stroke-width="0.5"/><path d="M1427.2,905.3L1427.9,785L1429.6,905.3z" fill="#bdbdbd" stroke="#e2e2e2" stroke-width="0.9" stroke-linejoin="round"/><path d="M1429.3,905.3L1429.8,879.2L1431.6,905.3z" fill="#86c888" stroke="#90d292" stroke-width="0.5"/><path d="M1446.7,905.3L1447.4,793.6L1449.1,905.3z" fill="#bdbdbd" stroke="#e2e2e2" stroke-width="0.9" stroke-linejoin="round"/><path d="M1448,905.3L1448.5,830.8L1450.3,905.3z" fill="#86c888" stroke="#90d292" stroke-width="0.5"/><path d="M1485.2,905.3L1485.9,766.1L1487.6,905.3z" fill="#bdbdbd" stroke="#e2e2e2" stroke-width="0.9" stroke-linejoin="round"/><path d="M1486.5,905.3L1487,814L1488.8,905.3z" fill="#86c888" stroke="#90d292" stroke-width="0.5"/><path d="M1524.8,905.3L1525.5,827.2L1527.2,905.3z" fill="#bdbdbd" stroke="#e2e2e2" stroke-width="0.9" stroke-linejoin="round"/><path d="M1543.4,905.3L1544.1,789.3L1545.8,905.3z" fill="#bdbdbd" stroke="#e2e2e2" stroke-width="0.9" stroke-linejoin="round"/><path d="M1545,905.3L1545.5,832.2L1547.3,905.3z" fill="#86c888" stroke="#90d292" stroke-width="0.5"/><path d="M1582,905.3L1582.7,772.3L1584.4,905.3z" fill="#bdbdbd" stroke="#e2e2e2" stroke-width="0.9" stroke-linejoin="round"/><path d="M1584.3,905.3L1584.8,866.6L1586.6,905.3z" fill="#86c888" stroke="#90d292" stroke-width="0.5"/><path d="M1601.5,905.3L1602.2,743.8L1603.9,905.3z" fill="#bdbdbd" stroke="#e2e2e2" stroke-width="0.9" stroke-linejoin="round"/><path d="M1602.8,905.3L1603.3,812.5L1605.1,905.3z" fill="#86c888" stroke="#90d292" stroke-width="0.5"/><path d="M1640.4,905.3L1641.1,726.5L1642.8,905.3z" fill="#bdbdbd" stroke="#e2e2e2" stroke-width="0.9" stroke-linejoin="round"/><path d="M1641.7,905.3L1642.2,794.3L1644,905.3z" fill="#86c888" stroke="#90d292" stroke-width="0.5"/><path d="M1679.3,905.3L1680,788.6L1681.7,905.3z" fill="#bdbdbd" stroke="#e2e2e2" stroke-width="0.9" stroke-linejoin="round"/><path d="M1697.9,905.3L1698.6,750L1700.3,905.3z" fill="#bdbdbd" stroke="#e2e2e2" stroke-width="0.9" stroke-linejoin="round"/><path d="M1699.2,905.3L1699.7,792.9L1701.5,905.3z" fill="#86c888" stroke="#90d292" stroke-width="0.5"/><path d="M1736.6,905.3L1737.3,726.5L1739,905.3z" fill="#bdbdbd" stroke="#e2e2e2" stroke-width="0.9" stroke-linejoin="round"/><path d="M1738.9,905.3L1739.4,868L1741.2,905.3z" fill="#86c888" stroke="#90d292" stroke-width="0.5"/><path d="M1136.7,727.5V907.3" stroke="#e6dc2a" stroke-width="2.2" stroke-dasharray="2,1.9"/><path d="M1291.5,727.5V907.3" stroke="#e6dc2a" stroke-width="2.2" stroke-dasharray="2,1.9"/><path d="M1446.2,727.5V907.3" stroke="#e6dc2a" stroke-width="2.2" stroke-dasharray="2,1.9"/><path d="M1601,727.5V907.3" stroke="#e6dc2a" stroke-width="2.2" stroke-dasharray="2,1.9"/><path d="M1755.7,727.5V907.3" stroke="#e6dc2a" stroke-width="2.2" stroke-dasharray="2,1.9"/><text x="1019.8" y="732.4" font-size="16" text-anchor="end">1.0</text><text x="1019.8" y="768.4" font-size="16" text-anchor="end">0.8</text><text x="1019.8" y="805.4" font-size="16" text-anchor="end">0.6</text><text x="1019.8" y="841.4" font-size="16" text-anchor="end">0.4</text><text x="1019.8" y="877.4" font-size="16" text-anchor="end">0.2</text><text x="1019.8" y="912.9" font-size="16" text-anchor="end">0.0</text><text x="1083.5" y="926" font-size="16" text-anchor="middle">-900</text><text x="1164.5" y="926" font-size="16" text-anchor="middle">-700</text><text x="1244.5" y="926" font-size="16" text-anchor="middle">-500</text><text x="1325.5" y="926" font-size="16" text-anchor="middle">-300</text><text x="1405.5" y="926" font-size="16" text-anchor="middle">-100</text><text x="1486.5" y="926" font-size="16" text-anchor="middle">100</text><text x="1566.5" y="926" font-size="16" text-anchor="middle">300</text><text x="1647.5" y="926" font-size="16" text-anchor="middle">500</text><text x="1727.5" y="926" font-size="16" text-anchor="middle">700</text><text x="1807.5" y="926" font-size="16" text-anchor="middle">900</text><text x="1445.8" y="953.2" font-size="16.9" text-anchor="middle">TII Subcarrier</text><text transform="translate(976.4,816.4) rotate(-90)" font-size="15.4" font-weight="bold" text-anchor="middle">Magnitude</text></svg>
</body></html>
